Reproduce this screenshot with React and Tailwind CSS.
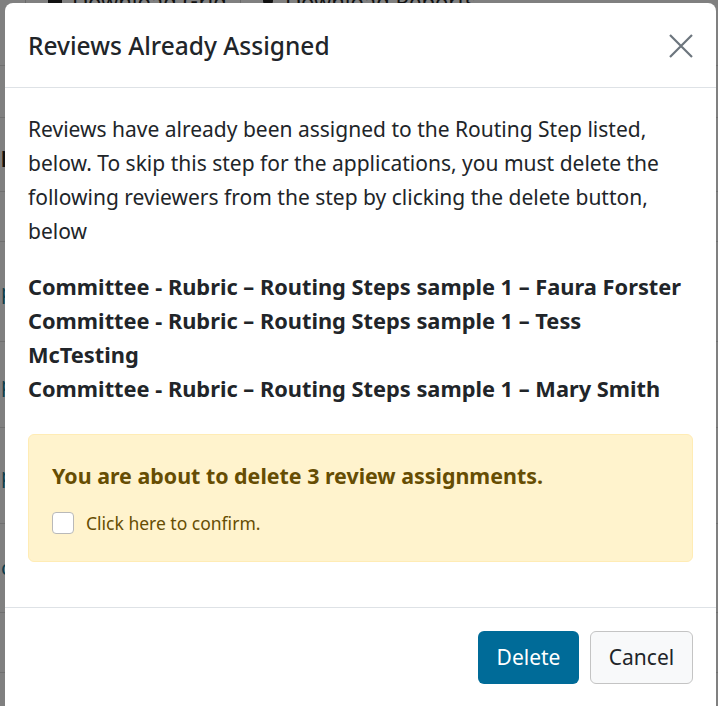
import { useState } from "react";

const rows = [
  { h: 58, mark: "" },
  { h: 52, mark: "" },
  { h: 74, mark: "p", dark: true },
  { h: 50, mark: "" },
  { h: 100, mark: "p" },
  { h: 86, mark: "p" },
  { h: 96, mark: "p" },
  { h: 89, mark: "c" },
  { h: 60, mark: "" },
];

const reviewers = [
  "Committee - Rubric \u2013 Routing Steps sample 1 \u2013 Faura Forster",
  "Committee - Rubric \u2013 Routing Steps sample 1 \u2013 Tess McTesting",
  "Committee - Rubric \u2013 Routing Steps sample 1 \u2013 Mary Smith",
];

export default function App() {

  const [confirmed, setConfirmed] = useState(false);

  return (

    <div className="relative h-[706px] w-[718px] overflow-hidden bg-[#808080] font-['Noto_Sans',sans-serif] text-[#212529]">

      {/* page behind the backdrop */}
      <div className="flex h-[8px] items-end overflow-hidden text-[22px] leading-none text-[#111]">
        <div className="flex h-full items-end gap-[10px] border-l border-[#6a6a6a] pl-[22px] ml-[25px] w-[215px]">
          <span className="mb-[2px] h-[14px] w-[14px] bg-[#111]"></span>
          <span className="-mb-[4px]">Download Grid</span>
        </div>
        <div className="flex h-full items-end gap-[12px] border-l border-[#6a6a6a] pl-[22px]">
          <span className="mb-[2px] h-[10px] w-[10px] rounded-full bg-[#111]"></span>
          <span className="-mb-[4px]">Download Reports</span>
        </div>
      </div>

      <div className="flex flex-col">
        {rows.map((row, i) => (
          <div
            key={i}
            className="flex items-center border-b border-[#707070] px-[1px] text-[20px]"
            style={{ height: row.h }}
          >
            <span className={row.dark ? "font-bold text-[#111]" : "text-[#0b3e4e]"}>
              {row.mark}
            </span>
          </div>
        ))}
      </div>

      {/* modal */}
      <div className="absolute left-[5px] top-[3px] flex h-[712px] w-[711px] flex-col rounded-[8px] bg-white">

        <div className="flex h-[85px] items-center justify-between border-b border-[#dee2e6] px-[23px] pt-[2px]">
          <h2 className="text-[24.5px] font-medium leading-none">
            Reviews Already Assigned
          </h2>
          <button className="mr-[-1px] text-[#6c757d]">
            <svg width="26" height="26" viewBox="0 0 26 26" fill="none" stroke="currentColor" strokeWidth="2.2">
              <path d="M2 2 L24 24 M24 2 L2 24" />
            </svg>
          </button>
        </div>

        <div className="flex flex-col px-[23px] pt-[24px] pb-[45px] text-[21px] leading-[34px]">

          <p>
            Reviews have already been assigned to the Routing Step listed, below. To skip this step for the applications, you must delete the following reviewers from the step by clicking the delete button, below
          </p>

          <div className="mt-[22px] text-[21.8px] font-bold">
            {reviewers.map((r) => (
              <div key={r}>{r}</div>
            ))}
          </div>

          <div className="mt-[28px] rounded-[6px] border border-[#ffecb5] bg-[#fff3cd] px-[23px] pt-[24px] pb-[25px] text-[#664d03]">
            <div className="text-[21.4px] font-bold leading-[34px]">
              You are about to delete 3 review assignments.
            </div>
            <label className="mt-[17px] flex items-center gap-[12px] text-[17.5px] leading-[26px]">
              <input
                type="checkbox"
                checked={confirmed}
                onChange={(e) => setConfirmed(e.target.checked)}
                className="h-[22px] w-[22px] appearance-none rounded-[4px] border border-[#b9b9b9] bg-white checked:bg-[#006b98]"
              />
              Click here to confirm.
            </label>
          </div>

        </div>

        <div className="flex justify-end gap-[11px] border-t border-[#dee2e6] px-[23px] pt-[23px]">
          <button className="h-[53px] w-[101px] rounded-[6px] bg-[#006b98] text-[21px] text-white">
            Delete
          </button>
          <button className="h-[53px] w-[103px] rounded-[6px] border border-[#c4c4c4] bg-[#f8f9fa] text-[21px] text-[#212529]">
            Cancel
          </button>
        </div>

      </div>

    </div>
  );
}
